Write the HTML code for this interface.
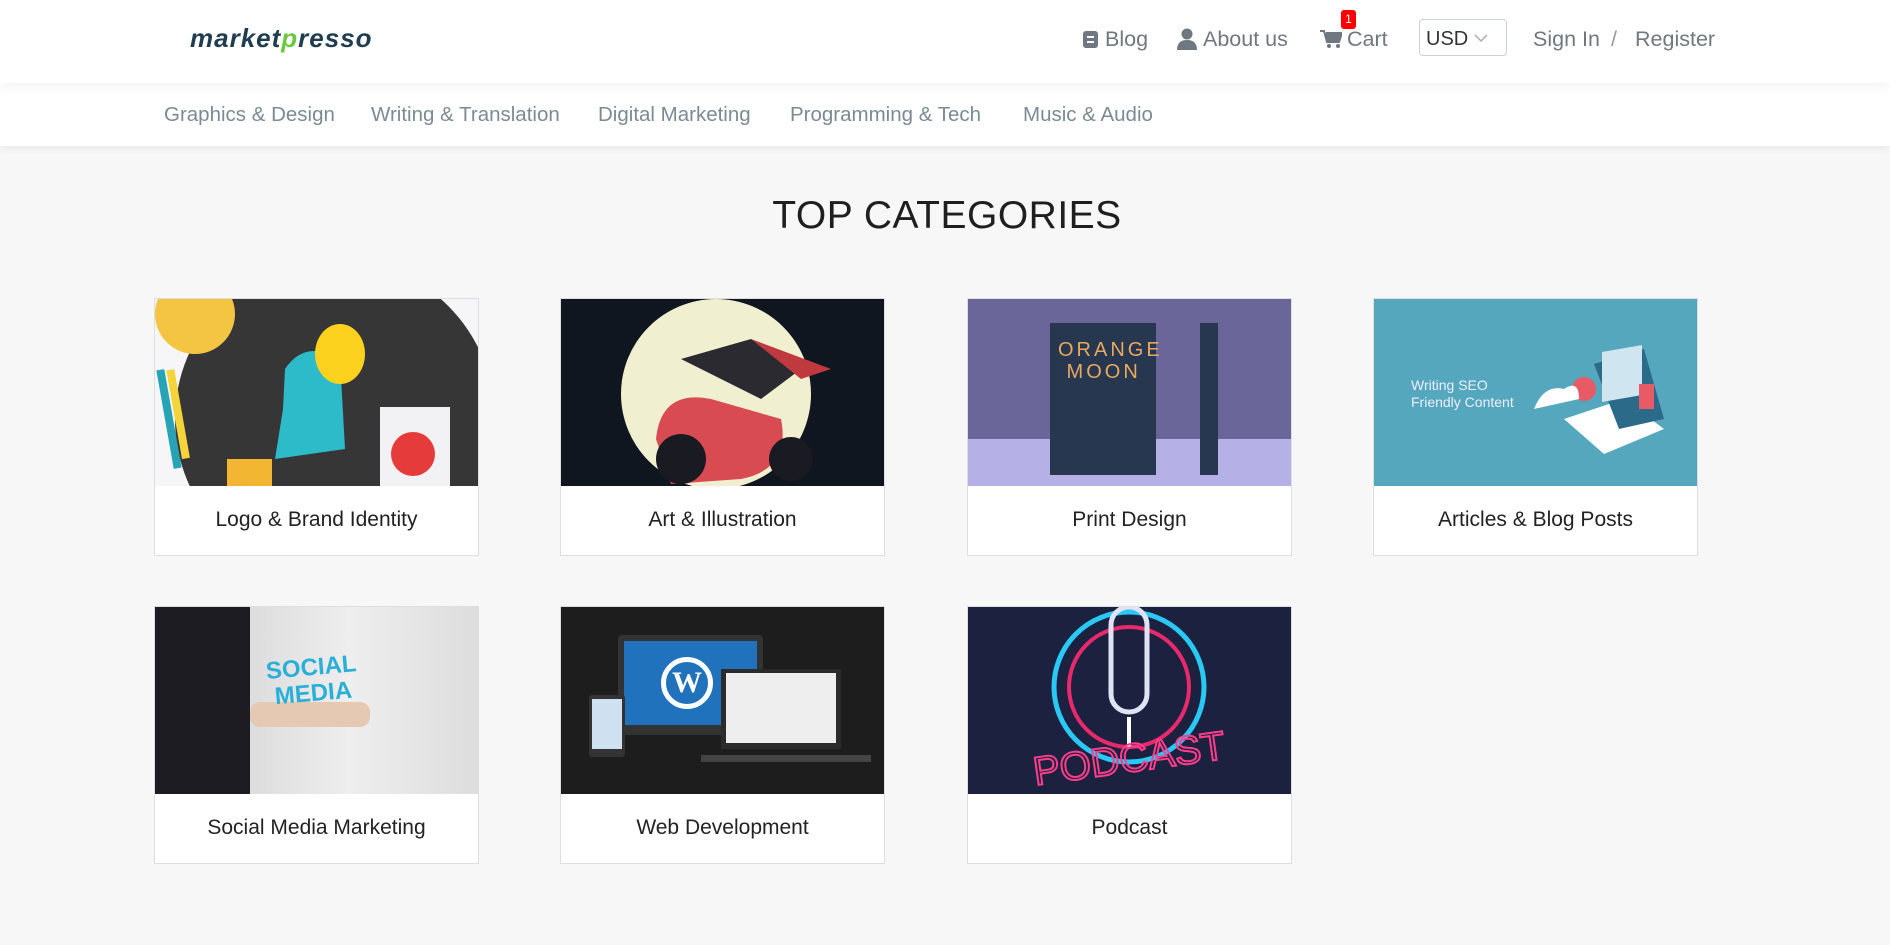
<!DOCTYPE html>
<html><head><meta charset="utf-8"><style>
*{margin:0;padding:0;box-sizing:border-box}
body{width:1890px;height:945px;background:#f7f7f7;font-family:"Liberation Sans",sans-serif;position:relative;overflow:hidden}
.hdr{position:absolute;left:0;top:0;width:1890px;height:83px;background:#fff;box-shadow:0 4px 10px rgba(0,0,0,.05);z-index:1}
.cat{position:absolute;left:0;top:83px;width:1890px;height:63px;background:#fff;box-shadow:0 3px 8px rgba(0,0,0,.06)}
.t{position:absolute;white-space:nowrap;z-index:2}
.nav{color:#6f7780;font-size:21.5px;top:27px}
.ci{color:#7b8a94;font-size:20.5px;top:103px}
h1{position:absolute;left:0;width:1894px;text-align:center;top:194px;font-size:39px;font-weight:normal;color:#1f1f1f;letter-spacing:.5px}
.card{position:absolute;width:325px;height:258px;background:#fff;border:1px solid #dedede}
.img{position:absolute;left:0;top:0;width:323px;height:187px;overflow:hidden}
.lab{position:absolute;left:0;top:187px;width:323px;height:70px;line-height:68px;text-align:center;font-size:21px;color:#222}
</style></head><body>
<div class="hdr"></div>
<div class="t" style="left:190px;top:23px;font-size:26px;font-weight:bold;font-style:italic;color:#1f3d4f;letter-spacing:1px">market<span style="color:#6cc93f">p</span>resso</div>
<svg class="t" style="left:1082px;top:30px" width="17" height="19"><rect x="1" y="1" width="15" height="17" rx="3" fill="#6f7780"/><rect x="5" y="6" width="7" height="2" fill="#fff"/><rect x="5" y="11" width="7" height="2" fill="#fff"/></svg>
<div class="t nav" style="left:1105px">Blog</div>
<svg class="t" style="left:1177px;top:28px" width="20" height="22"><circle cx="10" cy="6" r="5.5" fill="#6f7780"/><path d="M0 22 Q0 12 10 12 Q20 12 20 22Z" fill="#6f7780"/></svg>
<div class="t nav" style="left:1203px">About us</div>
<svg class="t" style="left:1320px;top:29px" width="22" height="20"><path d="M0 2h4l3 11h12l3-9H6" fill="#6f7780" stroke="#6f7780" stroke-width="2"/><circle cx="9" cy="17" r="2" fill="#6f7780"/><circle cx="18" cy="17" r="2" fill="#6f7780"/></svg>
<div class="t" style="left:1341px;top:10px;width:15px;height:19px;background:#f00;border-radius:3px;color:#fff;font-size:12px;text-align:center;line-height:19px">1</div>
<div class="t nav" style="left:1347px">Cart</div>
<div class="t" style="left:1419px;top:19px;width:88px;height:37px;border:1px solid #ccd2d8;border-radius:4px;background:#fff"></div>
<div class="t" style="left:1426px;top:28px;font-size:20px;color:#333">USD</div>
<svg class="t" style="left:1474px;top:34px" width="14" height="9"><path d="M1 1l6 6 6-6" fill="none" stroke="#aab" stroke-width="1.5"/></svg>
<div class="t nav" style="left:1533px">Sign In</div>
<div class="t nav" style="left:1611px;color:#999">/</div>
<div class="t nav" style="left:1635px">Register</div>
<div class="cat"></div>
<div class="t ci" style="left:164px">Graphics &amp; Design</div>
<div class="t ci" style="left:371px">Writing &amp; Translation</div>
<div class="t ci" style="left:598px">Digital Marketing</div>
<div class="t ci" style="left:790px">Programming &amp; Tech</div>
<div class="t ci" style="left:1023px">Music &amp; Audio</div>
<h1>TOP CATEGORIES</h1>

<div class="card" style="left:154px;top:298px"><div class="img" style="background:#f6f6f8">
<svg width="323" height="187"><circle cx="180" cy="120" r="160" fill="#363636"/><circle cx="40" cy="15" r="40" fill="#f4c542"/><path d="M130 70 Q150 40 185 60 L190 150 L120 160 L128 110 Z" fill="#2dbbc9"/><ellipse cx="185" cy="55" rx="25" ry="30" fill="#fcd21e"/><rect x="225" y="108" width="70" height="79" fill="#f2f2f4"/><circle cx="258" cy="155" r="22" fill="#e63b3b"/><rect x="72" y="160" width="45" height="27" fill="#f2b632"/><rect x="10" y="70" width="8" height="100" fill="#26a3b5" transform="rotate(-10 14 120)"/><rect x="20" y="70" width="8" height="90" fill="#f5d33b" transform="rotate(-10 24 120)"/></svg></div>
<div class="lab">Logo &amp; Brand Identity</div></div>

<div class="card" style="left:560px;top:298px"><div class="img" style="background:#10161f">
<svg width="323" height="187"><circle cx="155" cy="95" r="95" fill="#f0efcf"/><path d="M120 60 L190 40 L240 70 L200 100Z" fill="#2a2a30"/><path d="M95 140 Q100 90 150 100 L220 120 Q230 170 180 180 L110 185Z" fill="#d84b52"/><circle cx="120" cy="160" r="25" fill="#1a1a22"/><circle cx="230" cy="160" r="22" fill="#1a1a22"/><path d="M190 40 L270 70 L240 80Z" fill="#c0393f"/></svg></div>
<div class="lab">Art &amp; Illustration</div></div>

<div class="card" style="left:967px;top:298px"><div class="img" style="background:#6b6699">
<div style="position:absolute;left:0;top:140px;width:323px;height:47px;background:#b5b0e6"></div>
<div style="position:absolute;left:82px;top:24px;width:106px;height:152px;background:#27374f"></div>
<div style="position:absolute;left:90px;top:40px;color:#e8a860;font-size:20px;letter-spacing:3px;line-height:22px">ORANGE<br>&nbsp;MOON</div>
<div style="position:absolute;left:232px;top:24px;width:18px;height:152px;background:#27374f"></div></div>
<div class="lab">Print Design</div></div>

<div class="card" style="left:1373px;top:298px"><div class="img" style="background:#55a7bd">
<div style="position:absolute;left:37px;top:78px;color:#eef;font-size:14px;line-height:17px">Writing SEO<br>Friendly Content</div>
<svg style="position:absolute;left:160px;top:30px" width="150" height="130"><path d="M30 90 L90 70 L130 100 L70 125Z" fill="#fff"/><path d="M60 35 L110 20 L130 90 L85 100Z" fill="#2c6a8a"/><rect x="68" y="35" width="40" height="50" fill="#cfe6f0" transform="skewY(-10)"/><circle cx="50" cy="60" r="12" fill="#e85a65"/><rect x="105" y="55" width="15" height="25" fill="#e85a65"/><path d="M0 80 Q10 55 30 60 Q45 50 45 70Z" fill="#fff"/></svg></div>
<div class="lab">Articles &amp; Blog Posts</div></div>

<div class="card" style="left:154px;top:606px"><div class="img" style="background:linear-gradient(90deg,#ccc,#eee 60%,#ddd)">
<div style="position:absolute;left:0;top:0;width:95px;height:187px;background:#1c1c22"></div>
<div style="position:absolute;left:95px;top:95px;width:120px;height:25px;background:#e6c9b2;border-radius:10px"></div>
<div style="position:absolute;left:112px;top:48px;color:#2ab0d8;font-size:24px;font-weight:bold;line-height:26px;transform:rotate(-5deg)">SOCIAL<br>&nbsp;MEDIA</div></div>
<div class="lab">Social Media Marketing</div></div>

<div class="card" style="left:560px;top:606px"><div class="img" style="background:#1d1d1d">
<div style="position:absolute;left:57px;top:28px;width:145px;height:100px;background:#333;border-radius:4px"></div>
<div style="position:absolute;left:63px;top:34px;width:133px;height:84px;background:#1f72bb"></div>
<div style="position:absolute;left:100px;top:50px;width:52px;height:52px;border-radius:50%;border:5px solid #fff;color:#fff;font-weight:bold;font-size:30px;text-align:center;line-height:42px;font-family:'Liberation Serif',serif">W</div>
<div style="position:absolute;left:160px;top:62px;width:120px;height:80px;background:#2b2b2b"></div>
<div style="position:absolute;left:165px;top:66px;width:110px;height:70px;background:#eee"></div>
<div style="position:absolute;left:28px;top:88px;width:36px;height:62px;background:#333;border-radius:3px"></div>
<div style="position:absolute;left:31px;top:92px;width:30px;height:50px;background:#cfe0f0"></div>
<div style="position:absolute;left:140px;top:148px;width:170px;height:7px;background:#444"></div></div>
<div class="lab">Web Development</div></div>

<div class="card" style="left:967px;top:606px"><div class="img" style="background:#1c2140">
<svg width="323" height="187"><circle cx="161" cy="80" r="75" fill="none" stroke="#29c8f5" stroke-width="5"/><circle cx="161" cy="80" r="60" fill="none" stroke="#e8296b" stroke-width="4"/><rect x="143" y="0" width="36" height="105" rx="18" fill="none" stroke="#dfe3f3" stroke-width="5"/><line x1="161" y1="110" x2="161" y2="140" stroke="#fff" stroke-width="4"/><text x="161" y="165" text-anchor="middle" font-family="Liberation Sans" font-size="40" fill="none" stroke="#ff3d8a" stroke-width="2" transform="rotate(-8 161 150)">PODCAST</text></svg></div>
<div class="lab">Podcast</div></div>
</body></html>
